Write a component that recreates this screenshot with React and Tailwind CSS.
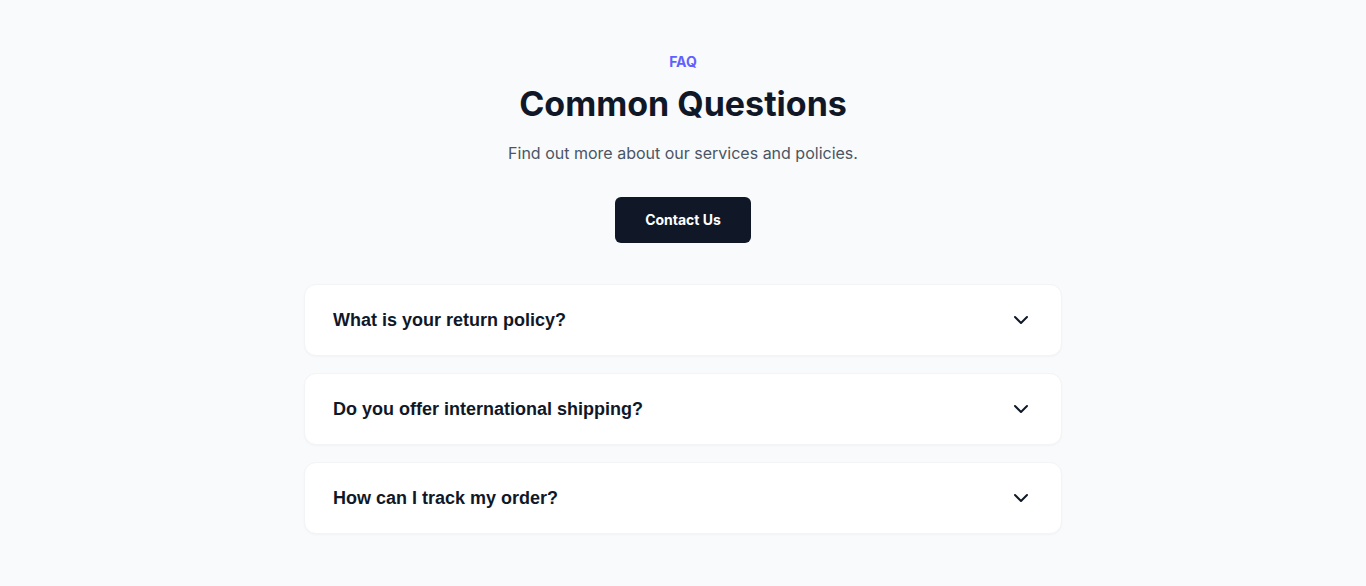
import { ChevronDown } from "lucide-react";

const questions = [
  "What is your return policy?",
  "Do you offer international shipping?",
  "How can I track my order?",
];

const FaqItem = ({ question }) => (
  <button className="flex h-[72px] w-full items-center justify-between rounded-xl border border-gray-100 bg-white px-7 text-left shadow-[0_1px_2px_rgba(0,0,0,0.03)]">
    <span className="font-['Liberation_Sans',Arial,sans-serif] text-lg font-bold text-gray-900">
      {question}
    </span>
    <ChevronDown className="h-6 w-6 text-gray-900" strokeWidth={2} />
  </button>
);

export default function App() {
  return (
    <div className="min-h-screen bg-gray-50 pt-[52px] pb-[52px] font-['Inter',sans-serif]">
      <div className="mx-auto flex w-[758px] flex-col items-center">
        <p className="text-sm leading-5 font-bold text-indigo-500">FAQ</p>
        <h1 className="mt-3 text-[34px] leading-10 font-bold text-gray-900">
          Common Questions
        </h1>
        <p className="mt-[17px] text-base leading-6 text-gray-600">
          Find out more about our services and policies.
        </p>
        <button className="mt-8 h-[46px] rounded-md bg-gray-900 px-[30px] text-sm font-bold text-white">
          Contact Us
        </button>

        <div className="mt-[41px] flex w-full flex-col gap-[17px]">
          {questions.map((q) => (
            <FaqItem key={q} question={q} />
          ))}
        </div>
      </div>
    </div>
  );
}
